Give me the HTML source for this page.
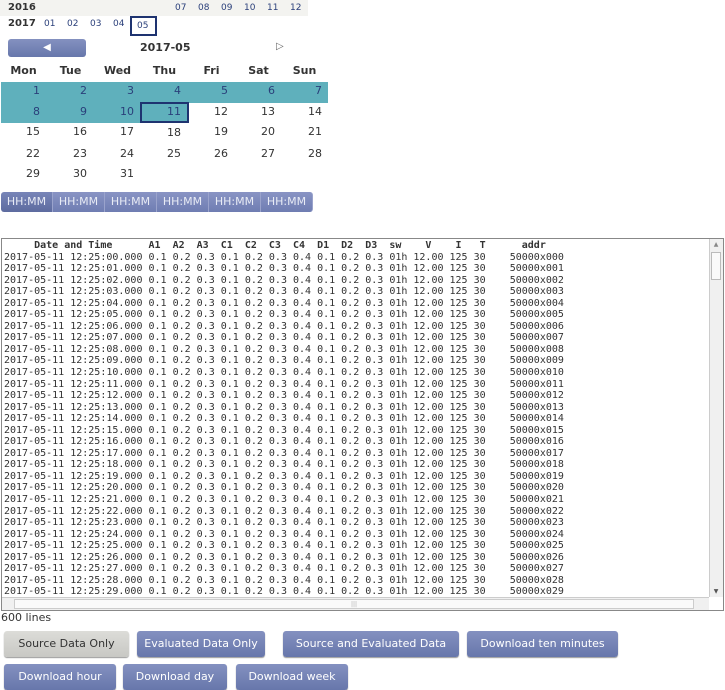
<!DOCTYPE html>
<html><head><meta charset="utf-8"><style>
body{margin:0;width:725px;height:690px;overflow:hidden;background:#fff;font-family:"DejaVu Sans","Liberation Sans",sans-serif;position:relative;color:#333}
.a{position:absolute}
.yr{font-size:10px;font-weight:bold;color:#333}
.mo{font-size:9px;color:#2a3f7a;position:absolute}
.dh{position:absolute;top:64px;font-size:11px;font-weight:bold;color:#333;width:47px;text-align:center}
.d{position:absolute;width:40px;text-align:right;font-size:11px;color:#333;height:20px;line-height:20px}
.t{position:absolute;height:21px;background:#5fb0bc}
.hh{position:absolute;top:192px;height:20px;width:51px;background:linear-gradient(#8994c4,#6f7db2);color:#e8ebf5;font-size:11px;text-align:center;line-height:20px;border-right:1px solid #9aa3cc}
pre{margin:0;font-family:"DejaVu Sans Mono","Liberation Mono",monospace;font-size:10px;line-height:11.55px;color:#333}
.b{position:absolute;height:26px;line-height:26px;text-align:center;font-size:11px;color:#fff;border-radius:3px;background:linear-gradient(#8491c0,#6777ab);box-shadow:0 1px 1px #999}
</style></head><body>
<div class="a" style="left:0;top:0;width:308px;height:16px;background:#f3f3f0"></div>
<div class="a yr" style="left:8px;top:2px">2016</div>
<div class="mo" style="left:175px;top:3px">07</div><div class="mo" style="left:198px;top:3px">08</div><div class="mo" style="left:221px;top:3px">09</div><div class="mo" style="left:244px;top:3px">10</div><div class="mo" style="left:267px;top:3px">11</div><div class="mo" style="left:290px;top:3px">12</div>
<div class="a yr" style="left:8px;top:18px">2017</div>
<div class="mo" style="left:44px;top:19px">01</div><div class="mo" style="left:67px;top:19px">02</div><div class="mo" style="left:90px;top:19px">03</div><div class="mo" style="left:113px;top:19px">04</div>
<div class="a" style="left:130px;top:16px;width:23px;height:16px;border:2px solid #1e3370"></div>
<div class="mo" style="left:137px;top:21px">05</div>
<div class="a" style="left:8px;top:39px;width:78px;height:18px;border-radius:3px;background:linear-gradient(#8491c0,#6777ab);color:#fff;text-align:center;font-size:10px;line-height:18px">&#9664;</div>
<div class="a" style="left:140px;top:41px;font-size:11px;font-weight:bold;color:#333">2017-05</div>
<div class="a" style="left:276px;top:41px;font-size:10px;color:#666">&#9655;</div>
<div class="dh" style="left:0">Mon</div><div class="dh" style="left:47px">Tue</div><div class="dh" style="left:94px">Wed</div><div class="dh" style="left:141px">Thu</div><div class="dh" style="left:188px">Fri</div><div class="dh" style="left:235px">Sat</div><div class="dh" style="left:281px">Sun</div>
<div class="t" style="left:1px;top:82px;width:327px"></div>
<div class="t" style="left:1px;top:102px;width:140px"></div>
<div class="a" style="left:140px;top:102px;width:45px;height:17px;background:#5fb0bc;border:2px solid #1e3370"></div>
<div style="position:absolute;left:0;top:81px;color:#2a3f7a">
<div class="d" style="left:0;top:0;color:#2a3f7a">1</div><div class="d" style="left:47px;top:0;color:#2a3f7a">2</div><div class="d" style="left:94px;top:0;color:#2a3f7a">3</div><div class="d" style="left:141px;top:0;color:#2a3f7a">4</div><div class="d" style="left:188px;top:0;color:#2a3f7a">5</div><div class="d" style="left:235px;top:0;color:#2a3f7a">6</div><div class="d" style="left:282px;top:0;color:#2a3f7a">7</div>
<div class="d" style="left:0;top:21px;color:#2a3f7a">8</div><div class="d" style="left:47px;top:21px;color:#2a3f7a">9</div><div class="d" style="left:94px;top:21px;color:#2a3f7a">10</div><div class="d" style="left:141px;top:21px;color:#2a3f7a">11</div><div class="d" style="left:188px;top:21px">12</div><div class="d" style="left:235px;top:21px">13</div><div class="d" style="left:282px;top:21px">14</div>
<div class="d" style="left:0;top:41px">15</div><div class="d" style="left:47px;top:41px">16</div><div class="d" style="left:94px;top:41px">17</div><div class="d" style="left:141px;top:42px">18</div><div class="d" style="left:188px;top:41px">19</div><div class="d" style="left:235px;top:41px">20</div><div class="d" style="left:282px;top:41px">21</div>
<div class="d" style="left:0;top:63px">22</div><div class="d" style="left:47px;top:63px">23</div><div class="d" style="left:94px;top:63px">24</div><div class="d" style="left:141px;top:63px">25</div><div class="d" style="left:188px;top:63px">26</div><div class="d" style="left:235px;top:63px">27</div><div class="d" style="left:282px;top:63px">28</div>
<div class="d" style="left:0;top:83px">29</div><div class="d" style="left:47px;top:83px">30</div><div class="d" style="left:94px;top:83px">31</div>
</div>
<div class="hh" style="left:1px;background:linear-gradient(#7885b8,#5d6b9f);border-radius:3px 0 0 3px">HH:MM</div><div class="hh" style="left:53px">HH:MM</div><div class="hh" style="left:105px">HH:MM</div><div class="hh" style="left:157px">HH:MM</div><div class="hh" style="left:209px">HH:MM</div><div class="hh" style="left:261px;border-radius:0 3px 3px 0">HH:MM</div>
<div class="a" style="left:1px;top:238px;width:723px;height:373px;border:1px solid #888;overflow:hidden;box-sizing:border-box">
<pre style="position:absolute;left:2px;top:1px"><b>     Date and Time      A1  A2  A3  C1  C2  C3  C4  D1  D2  D3  sw    V    I   T      addr</b>
2017-05-11 12:25:00.000 0.1 0.2 0.3 0.1 0.2 0.3 0.4 0.1 0.2 0.3 01h 12.00 125 30    50000x000
2017-05-11 12:25:01.000 0.1 0.2 0.3 0.1 0.2 0.3 0.4 0.1 0.2 0.3 01h 12.00 125 30    50000x001
2017-05-11 12:25:02.000 0.1 0.2 0.3 0.1 0.2 0.3 0.4 0.1 0.2 0.3 01h 12.00 125 30    50000x002
2017-05-11 12:25:03.000 0.1 0.2 0.3 0.1 0.2 0.3 0.4 0.1 0.2 0.3 01h 12.00 125 30    50000x003
2017-05-11 12:25:04.000 0.1 0.2 0.3 0.1 0.2 0.3 0.4 0.1 0.2 0.3 01h 12.00 125 30    50000x004
2017-05-11 12:25:05.000 0.1 0.2 0.3 0.1 0.2 0.3 0.4 0.1 0.2 0.3 01h 12.00 125 30    50000x005
2017-05-11 12:25:06.000 0.1 0.2 0.3 0.1 0.2 0.3 0.4 0.1 0.2 0.3 01h 12.00 125 30    50000x006
2017-05-11 12:25:07.000 0.1 0.2 0.3 0.1 0.2 0.3 0.4 0.1 0.2 0.3 01h 12.00 125 30    50000x007
2017-05-11 12:25:08.000 0.1 0.2 0.3 0.1 0.2 0.3 0.4 0.1 0.2 0.3 01h 12.00 125 30    50000x008
2017-05-11 12:25:09.000 0.1 0.2 0.3 0.1 0.2 0.3 0.4 0.1 0.2 0.3 01h 12.00 125 30    50000x009
2017-05-11 12:25:10.000 0.1 0.2 0.3 0.1 0.2 0.3 0.4 0.1 0.2 0.3 01h 12.00 125 30    50000x010
2017-05-11 12:25:11.000 0.1 0.2 0.3 0.1 0.2 0.3 0.4 0.1 0.2 0.3 01h 12.00 125 30    50000x011
2017-05-11 12:25:12.000 0.1 0.2 0.3 0.1 0.2 0.3 0.4 0.1 0.2 0.3 01h 12.00 125 30    50000x012
2017-05-11 12:25:13.000 0.1 0.2 0.3 0.1 0.2 0.3 0.4 0.1 0.2 0.3 01h 12.00 125 30    50000x013
2017-05-11 12:25:14.000 0.1 0.2 0.3 0.1 0.2 0.3 0.4 0.1 0.2 0.3 01h 12.00 125 30    50000x014
2017-05-11 12:25:15.000 0.1 0.2 0.3 0.1 0.2 0.3 0.4 0.1 0.2 0.3 01h 12.00 125 30    50000x015
2017-05-11 12:25:16.000 0.1 0.2 0.3 0.1 0.2 0.3 0.4 0.1 0.2 0.3 01h 12.00 125 30    50000x016
2017-05-11 12:25:17.000 0.1 0.2 0.3 0.1 0.2 0.3 0.4 0.1 0.2 0.3 01h 12.00 125 30    50000x017
2017-05-11 12:25:18.000 0.1 0.2 0.3 0.1 0.2 0.3 0.4 0.1 0.2 0.3 01h 12.00 125 30    50000x018
2017-05-11 12:25:19.000 0.1 0.2 0.3 0.1 0.2 0.3 0.4 0.1 0.2 0.3 01h 12.00 125 30    50000x019
2017-05-11 12:25:20.000 0.1 0.2 0.3 0.1 0.2 0.3 0.4 0.1 0.2 0.3 01h 12.00 125 30    50000x020
2017-05-11 12:25:21.000 0.1 0.2 0.3 0.1 0.2 0.3 0.4 0.1 0.2 0.3 01h 12.00 125 30    50000x021
2017-05-11 12:25:22.000 0.1 0.2 0.3 0.1 0.2 0.3 0.4 0.1 0.2 0.3 01h 12.00 125 30    50000x022
2017-05-11 12:25:23.000 0.1 0.2 0.3 0.1 0.2 0.3 0.4 0.1 0.2 0.3 01h 12.00 125 30    50000x023
2017-05-11 12:25:24.000 0.1 0.2 0.3 0.1 0.2 0.3 0.4 0.1 0.2 0.3 01h 12.00 125 30    50000x024
2017-05-11 12:25:25.000 0.1 0.2 0.3 0.1 0.2 0.3 0.4 0.1 0.2 0.3 01h 12.00 125 30    50000x025
2017-05-11 12:25:26.000 0.1 0.2 0.3 0.1 0.2 0.3 0.4 0.1 0.2 0.3 01h 12.00 125 30    50000x026
2017-05-11 12:25:27.000 0.1 0.2 0.3 0.1 0.2 0.3 0.4 0.1 0.2 0.3 01h 12.00 125 30    50000x027
2017-05-11 12:25:28.000 0.1 0.2 0.3 0.1 0.2 0.3 0.4 0.1 0.2 0.3 01h 12.00 125 30    50000x028
2017-05-11 12:25:29.000 0.1 0.2 0.3 0.1 0.2 0.3 0.4 0.1 0.2 0.3 01h 12.00 125 30    50000x029
2017-05-11 12:25:30.000 0.1 0.2 0.3 0.1 0.2 0.3 0.4 0.1 0.2 0.3 01h 12.00 125 30    50000x030</pre>
<div class="a" style="right:0;top:0;width:13px;height:359px;background:#f0f0f0;border-left:1px solid #ccc">
<div class="a" style="left:0;top:0;width:12px;height:12px;font-size:6px;color:#888;text-align:center;line-height:12px">&#9650;</div>
<div class="a" style="left:1px;top:13px;width:10px;height:28px;background:#fafafa;border:1px solid #bbb;box-sizing:border-box"></div>
<div class="a" style="left:0;bottom:0;width:12px;height:12px;font-size:6px;color:#555;text-align:center;line-height:12px">&#9660;</div></div>
<div class="a" style="left:0;bottom:0;width:707px;height:12px;background:#f0f0f0;border-top:1px solid #ccc">
<div class="a" style="left:12px;top:1px;width:680px;height:10px;background:#fafafa;border:1px solid #ccc;box-sizing:border-box;font-size:6px;color:#aaa;text-align:center;line-height:9px">|||</div></div>
<div class="a" style="right:0;bottom:0;width:14px;height:13px;background:#fff"></div>
</div>
<div class="a" style="left:1px;top:611px;font-size:11px;color:#333">600 lines</div>
<div class="b" style="left:4px;top:631px;width:125px;background:linear-gradient(#dcdcd8,#c8c8c4);color:#333">Source Data Only</div>
<div class="b" style="left:137px;top:631px;width:128px">Evaluated Data Only</div>
<div class="b" style="left:283px;top:631px;width:176px">Source and Evaluated Data</div>
<div class="b" style="left:467px;top:631px;width:151px">Download ten minutes</div>
<div class="b" style="left:4px;top:664px;width:112px">Download hour</div>
<div class="b" style="left:123px;top:664px;width:104px">Download day</div>
<div class="b" style="left:236px;top:664px;width:112px">Download week</div>
</body></html>
